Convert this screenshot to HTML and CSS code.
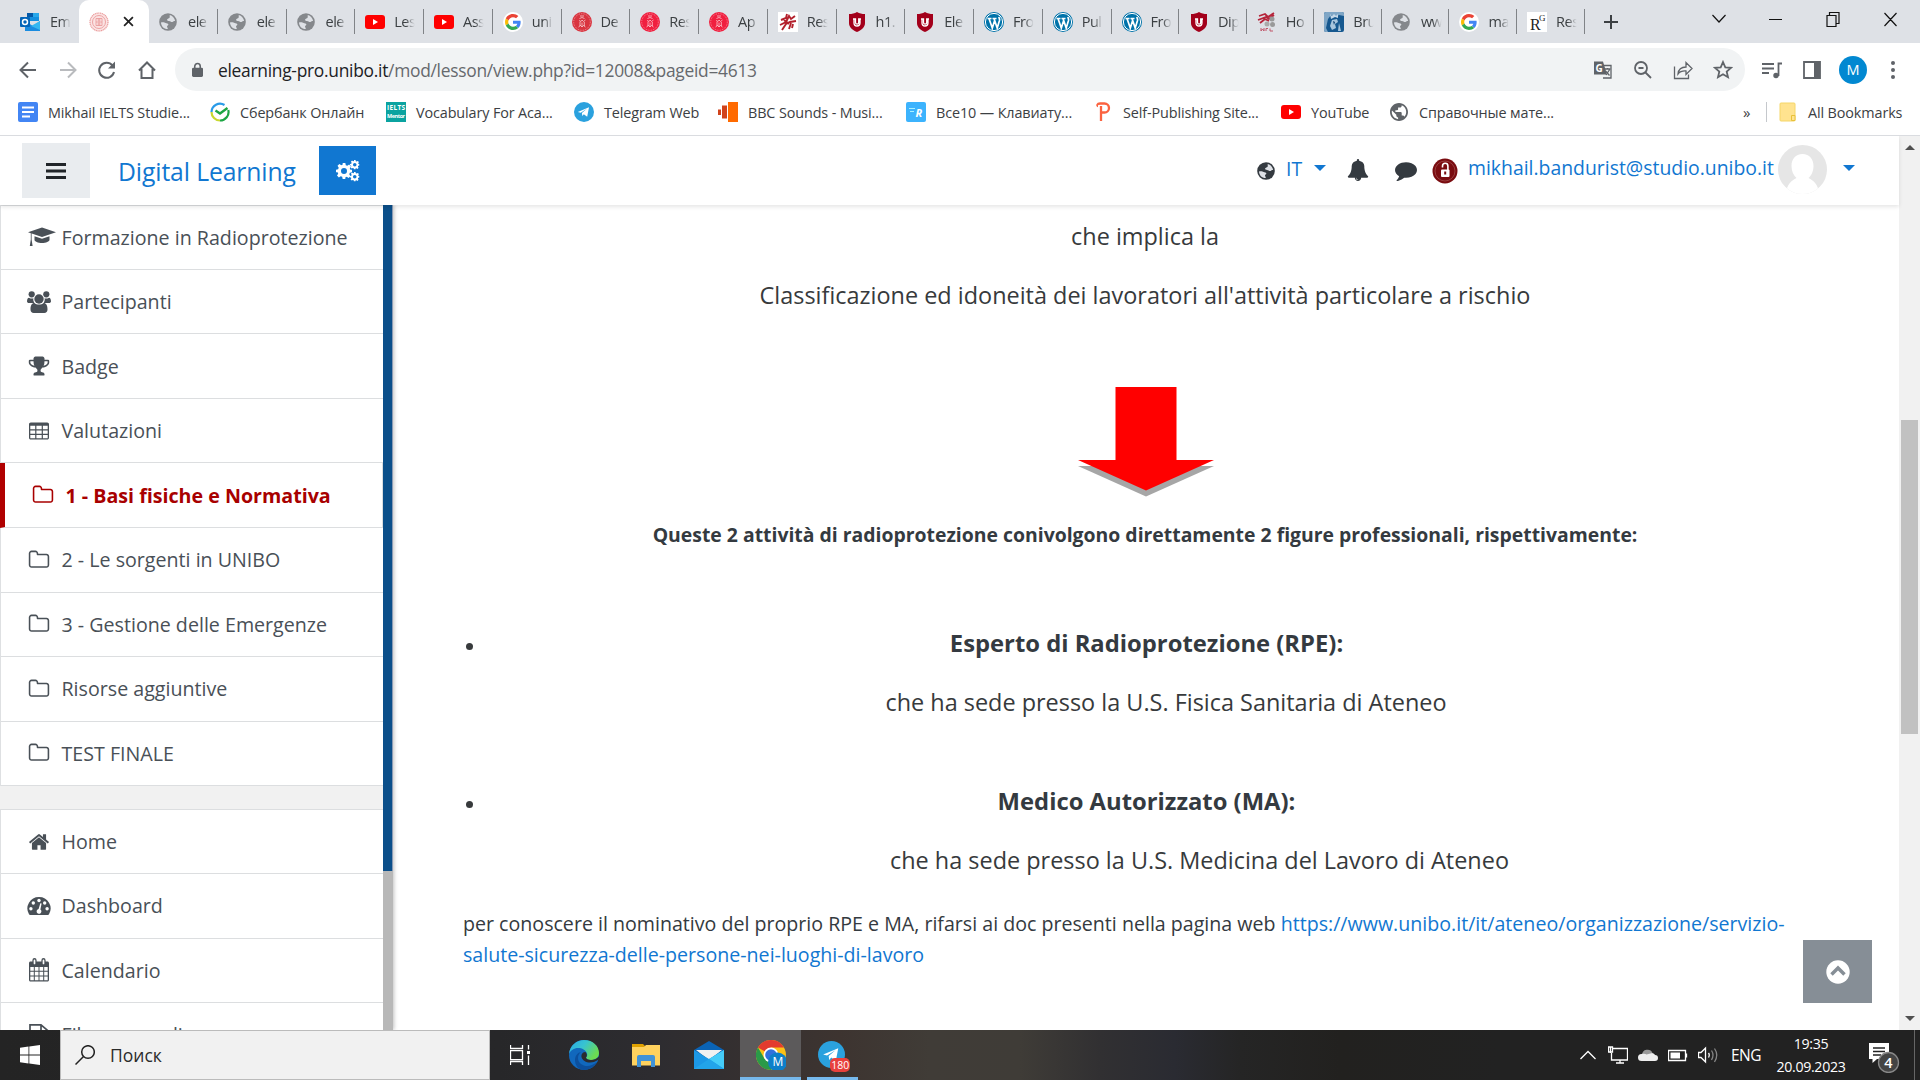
FILE: index.html
```html
<!DOCTYPE html>
<html lang="it">
<head>
<meta charset="utf-8">
<title>Formazione in Radioprotezione</title>
<link rel="stylesheet" href="styles.css">
</head>
<body>
<svg class="sprite" aria-hidden="true">
  <symbol id="globe" viewBox="2 2 20 20"><path d="M12 2C6.48 2 2 6.48 2 12s4.48 10 10 10 10-4.48 10-10S17.52 2 12 2zm-1 17.93c-3.95-.49-7-3.85-7-7.93 0-.62.08-1.21.21-1.79L9 15v1c0 1.1.9 2 2 2v1.93zm6.9-2.54c-.26-.81-1-1.39-1.9-1.39h-1v-3c0-.55-.45-1-1-1H8v-2h2c.55 0 1-.45 1-1V7h2c1.1 0 2-.9 2-2v-.41c2.93 1.19 5 4.06 5 7.41 0 2.08-.8 3.97-2.1 5.39z"/></symbol>
  <symbol id="favglobe" viewBox="0 0 20 20"><circle cx="10" cy="10" r="9.800"/><path d="M2.200 10.500c2.500-.8 4 0 5.200.7 1 .5 2.800.2 3 1.500.2 1-1.700 1.300-1.500 2.300l1 2.800c-4.300.2-7.500-3-7.700-7.300zM12 2.300c3 .7 5.500 3.500 5.900 6.700-1.200-.3-1.900.6-3 .9-1.300.3-2.400-.9-3.700-1.100-1.300-.1-2.700-.6-2.200-1.700.5-.9 2.100-.8 2.700-1.800.6-.9-.1-2 .3-3z" fill="#dee1e6" class="land"/></symbol>
  <symbol id="youtube" viewBox="0 0 20 20"><rect y="3" width="20" height="14" rx="3" fill="#f00"/><path d="M8 7l5 3-5 3z" fill="#fff"/></symbol>
  <symbol id="google" viewBox="0 0 20 20"><circle cx="10" cy="10" r="10" fill="#fff"/><g transform="translate(2 2) scale(.3333)"><path fill="#EA4335" d="M24 9.500c3.540 0 6.710 1.220 9.210 3.600l6.850-6.850C35.900 2.380 30.470 0 24 0 14.620 0 6.510 5.380 2.560 13.220l7.980 6.190C12.430 13.720 17.740 9.500 24 9.500z"/><path fill="#4285F4" d="M46.980 24.550c0-1.570-.15-3.090-.38-4.550H24v9.020h12.940c-.58 2.960-2.260 5.480-4.780 7.180l7.730 6c4.510-4.180 7.090-10.360 7.090-17.650z"/><path fill="#FBBC05" d="M10.530 28.590c-.48-1.450-.76-2.990-.76-4.590s.27-3.140.76-4.590l-7.980-6.190C.92 16.460 0 20.120 0 24c0 3.880.92 7.540 2.560 10.780l7.970-6.190z"/><path fill="#34A853" d="M24 48c6.480 0 11.930-2.130 15.890-5.810l-7.730-6c-2.150 1.450-4.920 2.300-8.160 2.300-6.260 0-11.570-4.220-13.470-9.910l-7.980 6.190C6.510 42.620 14.620 48 24 48z"/></g></symbol>
  <symbol id="seal" viewBox="0 0 20 20"><circle cx="10" cy="10" r="10" fill="currentColor"/><g fill="none" stroke="#fff" stroke-opacity=".6"><circle cx="10" cy="10" r="8.300" stroke-width=".8" stroke-dasharray=".8 1"/><path d="M8 4h4M7.500 6.500l2.500-1 2.500 1M7 8.500l2 1 1-1.500 1.500 1.500L13.500 8M8 10v4M10 10.500v4M12.300 10v4M6.500 15l2-1.500 1.500 1.500 1.500-1.500 2 1.500" stroke-width="1"/></g></symbol>
  <symbol id="sealpale" viewBox="0 0 20 20"><circle cx="10" cy="10" r="9.300" fill="#fbe3e3"/><g fill="none" stroke="#ea9c9c"><circle cx="10" cy="10" r="9" stroke-width="1.200" stroke-dasharray="1.200 .6"/><circle cx="10" cy="10" r="6.500" stroke-width=".9"/><path d="M7 6.500h6v7H7zM7 10h6M10 6v8M8.500 8h3M8.500 12h3" stroke-width=".9"/></g></symbol>
  <symbol id="ushield" viewBox="0 0 20 20"><path d="M10 0c2.500 1.500 5 2 8 2v9c0 4-3 7-8 9-5-2-8-5-8-9V2c3 0 5.500-.5 8-2z" fill="#a3001b"/><path d="M6 7h2.500v3.500a1.600 1.600 0 0 0 3.200 0V7H14M13 7v4a3 3 0 0 1-6 0V7" fill="none" stroke="#fff" stroke-width="1.300"/></symbol>
  <symbol id="wordpress" viewBox="0 0 20 20"><circle cx="10" cy="10" r="10" fill="#0073aa"/><circle cx="10" cy="10" r="8.600" fill="none" stroke="#fff"/><path d="M3.500 6.500h4M8.500 6.500h4M5 6.500l3.300 9.500 2.200-7M10 6.500l3.200 9.500 2.300-7.500c.4-1.500-.2-2.500-.8-3.500" fill="none" stroke="#fff" stroke-width="1.700"/></symbol>
  <symbol id="folder" viewBox="0 0 1792 1792"><path d="M1600 1312v-704q0-40-28-68t-68-28h-704q-40 0-68-28t-28-68v-64q0-40-28-68t-68-28h-320q-40 0-68 28t-28 68v960q0 40 28 68t68 28h1216q40 0 68-28t28-68zm128-704v704q0 92-66 158t-158 66h-1216q-92 0-158-66t-66-158v-960q0-92 66-158t158-66h320q92 0 158 66t66 158v32h672q92 0 158 66t66 158z"/></symbol>
  <symbol id="home" viewBox="0 0 1792 1792"><path d="M1472 992v480q0 26-19 45t-45 19h-384v-384h-256v384h-384q-26 0-45-19t-19-45v-480q0-1 .5-3t.5-3l575-474 575 474q1 2 1 6zm223-69l-62 74q-8 9-21 11h-3q-13 0-21-7l-692-577-692 577q-12 8-24 7-13-2-21-11l-62-74q-8-10-7-23.500t11-21.500l719-599q32-26 76-26t76 26l244 204v-195q0-14 9-23t23-9h192q14 0 23 9t9 23v408l219 182q10 8 11 21.500t-7 23.500z"/></symbol>
  <symbol id="comment" viewBox="0 0 1792 1792"><path d="M1792 896q0 174-120 321.500t-326 233-450 85.500q-70 0-145-8-198 175-460 242-49 14-114 22-17 2-30.500-9t-17.500-29v-1q-3-4-.5-12t2-10 4.500-9.500l6-9 7-8.500 8-9q7-8 31-34.500t34.500-38 31-39.500 32.500-51 27-59 26-76q-157-89-247.500-220t-90.500-281q0-130 71-248.500t191-204.500 286-136.500 348-50.500q244 0 450 85.500t326 233 120 321.500z"/></symbol>
  <symbol id="bell" viewBox="0 0 1792 1792"><path d="M912 1696q0-16-16-16-59 0-101.500-42.500t-42.500-101.500q0-16-16-16t-16 16q0 73 51.500 124.500t124.500 51.500q16 0 16-16zm816-288q0 52-38 90t-90 38h-448q0 106-75 181t-181 75-181-75-75-181h-448q-52 0-90-38t-38-90q50-42 91-88t85-119.500 74.500-158.500 50-206 19.500-260q0-152 117-282.500t307-158.500q-8-19-8-39 0-40 28-68t68-28 68 28 28 68q0 20-8 39 190 28 307 158.500t117 282.500q0 139 19.500 260t50 206 74.500 158.500 85 119.500 91 88z"/></symbol>
  <symbol id="trophy" viewBox="0 0 1792 1792"><path d="M522 883q-74-162-74-371h-256v96q0 78 94.500 162t235.500 113zm1078-275v-96h-256q0 209-74 371 141-29 235.500-113t94.500-162zm128-128v128q0 71-41.500 143t-112 130-173 97.500-215.500 44.500q-42 54-95 95-38 34-52.500 72.500t-14.500 89.500q0 54 30.500 91t97.500 37q75 0 133.500 45.500t58.500 114.500v64q0 14-9 23t-23 9h-832q-14 0-23-9t-9-23v-64q0-69 58.500-114.500t133.500-45.500q67 0 97.500-37t30.500-91q0-51-14.500-89.500t-52.500-72.500q-53-41-95-95-113-5-215.500-44.500t-173-97.500-112-130-41.500-143v-128q0-40 28-68t68-28h288v-96q0-66 47-113t113-47h576q66 0 113 47t47 113v96h288q40 0 68 28t28 68z"/></symbol>
  <symbol id="cap" viewBox="0 0 28 22"><path d="M14 1.500L28 6.300 14 11 0 6.300z"/><path d="M6.500 10.200l7.500 2.500 7.500-2.500v3.800c0 1.500-3.500 3-7.500 3s-7.500-1.500-7.500-3z"/><path d="M3.600 7v6.500l1 6.500H1.800l1-6.500V7z"/></symbol>
  <symbol id="users" viewBox="0 0 24 22"><circle cx="4.700" cy="3.300" r="3.100"/><circle cx="19.300" cy="3.300" r="3.100"/><circle cx="12" cy="8" r="4.700"/><path d="M0 10.500C0 8 .8 6.700 2 6.700c1.500 1 3.500 1 4.400.6C6 9 6.500 10.500 7.400 12H2c-1.200 0-2-.6-2-1.500zM24 10.500c0-2.500-.8-3.800-2-3.800-1.500 1-3.500 1-4.400.6.400 1.700-.1 3.200-1 4.700H22c1.200 0 2-.6 2-1.500zM3.500 18.500c0-4 1.200-6.500 4-6.500 2 2 7 2 9 0 2.800 0 4 2.500 4 6.500 0 2.200-1.300 3.500-3.200 3.500H6.700c-1.900 0-3.200-1.300-3.200-3.500z"/></symbol>
  <symbol id="table" viewBox="0 0 22 22"><path fill-rule="evenodd" d="M2.800 2.500h16.400c1 0 1.800.8 1.800 1.800v13.400c0 1-.8 1.800-1.800 1.800H2.800c-1 0-1.800-.8-1.800-1.800V4.300c0-1 .8-1.800 1.800-1.800zM2.300 5.800v3.400H7.200V5.800zm6.100 0v3.400h5.300V5.800zm6.500 0v3.400h4.800V5.800zM2.300 10.400v3.400h4.900v-3.400zm6.100 0v3.400h5.300v-3.400zm6.500 0v3.400h4.800v-3.400zM2.300 15v3.200h4.900V15zm6.100 0v3.200h5.300V15zm6.500 0v3.200h4.800V15z"/></symbol>
  <symbol id="gauge" viewBox="0 0 24 20"><path d="M12 1a11.500 11.500 0 0 1 10 17.300c-.3.500-.6.700-1.100.7H3.100c-.5 0-.8-.2-1.100-.7A11.500 11.500 0 0 1 12 1z"/><g fill="#fff"><circle cx="12" cy="4.500" r="1.700"/><circle cx="6.300" cy="7" r="1.700"/><circle cx="17.700" cy="7" r="1.700"/><circle cx="3.900" cy="12.700" r="1.700"/><circle cx="20.100" cy="12.700" r="1.700"/><path d="M13.300 7.200l1.300.3-1.200 5.900a2.400 2.400 0 1 1-1.800-.4z"/></g></symbol>
  <symbol id="calendar" viewBox="0 0 22 24"><path fill-rule="evenodd" d="M2.500 3.500h17c.8 0 1.500.7 1.500 1.500V22c0 .8-.7 1.500-1.500 1.500h-17C1.700 23.500 1 22.800 1 22V5c0-.8.7-1.500 1.500-1.500zm-.2 5.500v3.700h3.500V9zm4.500 0v3.700h3.700V9zm4.700 0v3.700h3.700V9zm4.700 0v3.700h3.500V9zM2.300 13.700v3.800h3.500v-3.800zm4.500 0v3.800h3.700v-3.800zm4.700 0v3.800h3.700v-3.800zm4.700 0v3.800h3.500v-3.800zM2.300 18.500v3.700h3.500v-3.700zm4.500 0v3.700h3.700v-3.700zm4.700 0v3.700h3.700v-3.700zm4.700 0v3.700h3.500v-3.700z"/><path d="M6.500 2.200v3.300M15.500 2.200v3.300" stroke="#495057" stroke-width="4.200" stroke-linecap="round"/><path d="M6.500 2.400v3M15.500 2.400v3" stroke="#fff" stroke-width="1.700" stroke-linecap="round"/></symbol>
  <symbol id="file" viewBox="0 0 22 24"><path fill="none" stroke="currentColor" stroke-width="1.700" d="M2 1.800h11l7 6V23H2zM13 2v6h7"/></symbol>
  <symbol id="telegram" viewBox="0 0 20 20"><circle cx="10" cy="10" r="10" fill="#2aa1de"/><path d="M3.800 10L15 5.300l-1.800 9.500-3.400-2.500-1.500 1.800-.4-3 5-4.300-6.200 3.900z" fill="#fff"/></symbol>
  <symbol id="gear" viewBox="-12 -12 24 24"><path fill-rule="evenodd" d="M-2-12h4l.7 3.200 2.200.9 2.800-1.800 2.800 2.800-1.800 2.800.9 2.200L12-2v4l-3.200.7-.9 2.200 1.800 2.800-2.800 2.800-2.800-1.800-2.200.9L2 12h-4l-.7-3.200-2.200-.9-2.800 1.800-2.800-2.800 1.800-2.800-.9-2.200L-12 2v-4l3.200-.7.900-2.200-1.800-2.800 2.800-2.800 2.800 1.800 2.200-.9zM0-4.500a4.500 4.500 0 1 0 0 9 4.500 4.500 0 1 0 0-9z"/></symbol>
</svg>

<header class="tabstrip">
  <div class="tab first"><svg class="fav" viewBox="0 0 20 20"><path d="M7 1h12v8H7z" fill="#1490df"/><path d="M7 1h6v4H7z" fill="#0358a7"/><path d="M13 1h6v4h-6z" fill="#28a8ea"/><path d="M5 9l8 5 7-5v10H5z" fill="#1a8ce0"/><path d="M20 9v9l-9-4z" fill="#35b8f1"/><rect y="5" width="10" height="10" rx="1" fill="#0364b8"/><circle cx="5" cy="10" r="2.500" fill="none" stroke="#fff" stroke-width="1.500"/></svg><span>Em</span></div>
  <div class="tab active"><svg class="fav"><use href="#sealpale"/></svg><svg class="close" viewBox="0 0 10 10"><path d="M1 1l8 8M9 1L1 9"/></svg></div>
  <div class="tab"><svg class="fav grey"><use href="#favglobe"/></svg><span>ele</span></div>
  <div class="tab"><svg class="fav grey"><use href="#favglobe"/></svg><span>ele</span></div>
  <div class="tab"><svg class="fav grey"><use href="#favglobe"/></svg><span>ele</span></div>
  <div class="tab"><svg class="fav"><use href="#youtube"/></svg><span>Les</span></div>
  <div class="tab"><svg class="fav"><use href="#youtube"/></svg><span>Ass</span></div>
  <div class="tab"><svg class="fav"><use href="#google"/></svg><span>uni</span></div>
  <div class="tab"><svg class="fav rosso"><use href="#seal"/></svg><span>De</span></div>
  <div class="tab"><svg class="fav red"><use href="#seal"/></svg><span>Res</span></div>
  <div class="tab"><svg class="fav red"><use href="#seal"/></svg><span>Ap</span></div>
  <div class="tab"><svg class="fav" viewBox="0 0 20 20"><path d="M0 0h20v20H0z" fill="#fff"/><path d="M3 8l5-2 1-4M2 13l6-3 3-6 2 3 4-3M4 18l4-6 4-2 6-1M11 17l2-6M15 12l-1 4M6 8l5 4" fill="none" stroke="#b3202c" stroke-width="1.900"/></svg><span>Res</span></div>
  <div class="tab"><svg class="fav"><use href="#ushield"/></svg><span>h1.</span></div>
  <div class="tab"><svg class="fav"><use href="#ushield"/></svg><span>Ele</span></div>
  <div class="tab"><svg class="fav"><use href="#wordpress"/></svg><span>Fro</span></div>
  <div class="tab"><svg class="fav"><use href="#wordpress"/></svg><span>Pul</span></div>
  <div class="tab"><svg class="fav"><use href="#wordpress"/></svg><span>Fro</span></div>
  <div class="tab"><svg class="fav"><use href="#ushield"/></svg><span>Dip</span></div>
  <div class="tab"><svg class="fav" viewBox="0 0 20 20"><path d="M2 4l6-2 3 3 6-4M1 8l8-3 3 2 5-4M3 11l5-4 4 2" fill="none" stroke="#b5243a" stroke-width="1.800"/><circle cx="15" cy="7" r="2.500" fill="#999"/><circle cx="10" cy="12" r="2.500" fill="#aaa"/><circle cx="15.500" cy="12.500" r="2.500" fill="#999"/><path d="M4 16v3l1.500-2L7 19v-3M9 19v-2.500h2M13 16.500v2.500h3" fill="none" stroke="#c0566a" stroke-width="1"/></svg><span>Ho</span></div>
  <div class="tab"><svg class="fav" viewBox="0 0 20 20"><rect width="20" height="20" rx="2" fill="#16588f"/><path d="M0 2a2 2 0 0 1 2-2h16a2 2 0 0 1 2 2v2l-5-1-4 2-4-2-3 4-2 9 2 4H2a2 2 0 0 1-2-2z" fill="#7fa6c6"/><path d="M6 2l2 2 2-2 2 2 2-2v4l-3-1-4 2z" fill="#c5d8e8"/><path d="M8 8l5-1 1 3-3 2 1 4-4 2-2-4zM15 11l2 8h-3z" fill="#a9c6dd"/><path d="M9 9l2 1-1 3z" fill="#0c3f6e"/></svg><span>Bru</span></div>
  <div class="tab"><svg class="fav grey"><use href="#favglobe"/></svg><span>ww</span></div>
  <div class="tab"><svg class="fav"><use href="#google"/></svg><span>ma</span></div>
  <div class="tab"><svg class="fav" viewBox="0 0 20 20"><path d="M0 0h20v20H0z" fill="#fff"/><text x="3" y="18" font-size="16" class="serif">R</text><text x="12" y="9" font-size="9" class="serif">G</text></svg><span>Res</span></div>
  <svg class="newtab" viewBox="0 0 16 16"><path d="M8 1v14M1 8h14"/></svg>
  <svg class="winctl" viewBox="0 0 190 20"><path d="M6.500 6l6.500 7 6.500-7M63 10.500h13M121 6.500h9v11h-9zM123.500 6.500v-3h9.500v11h-3M178.500 4l12 13M190.500 4l-12 13" /></svg>
</header>

<section class="toolbar">
  <nav class="navbuttons">
    <svg viewBox="0 0 20 20"><path d="M18 10H3M10 2.500L2.500 10l7.500 7.500"/></svg>
    <svg class="off" viewBox="0 0 20 20"><path d="M2 10h15M10 2.500l7.500 7.500-7.500 7.500"/></svg>
    <svg viewBox="0 0 20 20"><path d="M17 12a7.500 7.500 0 1 1-1.500-6.500"/><path d="M18 1.500v7h-7z" class="solid"/></svg>
    <svg viewBox="0 0 20 20"><path d="M2 10.500L10 2.500l8 8M4.500 9v9h11V9"/></svg>
  </nav>
  <div class="omnibox">
    <svg class="lock" viewBox="0 0 12 16"><rect y="5.500" width="12" height="10" rx="1.500"/><path d="M3 6V4a3 3 0 0 1 6 0v2" fill="none" stroke="#5f6368" stroke-width="1.700"/></svg>
    <span class="url"><b>elearning-pro.unibo.it</b>/mod/lesson/view.php?id=12008&amp;pageid=4613</span>
    <div class="omniicons">
      <svg viewBox="0 0 20 20"><path d="M8 5.500h10v12.500h-8" class="thin"/><path d="M1 1.500h9l4 13H1z" class="solid"/><text x="2.500" y="11.500" font-size="10">G</text><path d="M11.500 9h6M14.500 8v1.500M13 15l4-6M12.500 11l4 4.500" class="thin"/></svg>
      <svg viewBox="0 0 20 20"><circle cx="8" cy="8" r="6"/><path d="M12.500 12.500l5.500 5.500M5.500 8h5"/></svg>
      <svg viewBox="0 0 20 20"><path d="M1.500 6.500v12h14v-4M5 14c.5-5 3-7 8-7V2.500l6 6-6 6V11c-4-.3-6 .5-8 3z" class="thin"/></svg>
      <svg viewBox="0 0 20 20"><path d="M10 2l2.300 5.300 5.700.5-4.300 3.800 1.300 5.600-5-3-5 3 1.300-5.600L2 7.800l5.700-.5z"/></svg>
    </div>
  </div>
  <div class="actions">
    <svg viewBox="0 0 20 20"><path d="M0 4h12M0 8.500h12M0 13h7M16.500 16V3.500H20"/><circle cx="14" cy="15.500" r="2.700" class="solid"/></svg>
    <svg viewBox="0 0 20 20"><path d="M2 2h16v16H2z"/><path d="M12 2h6v16h-6z" class="solid"/></svg>
    <span class="profile">M</span>
    <svg class="dots" viewBox="0 0 20 20"><circle cx="10" cy="3" r="2"/><circle cx="10" cy="10" r="2"/><circle cx="10" cy="17" r="2"/></svg>
  </div>
</section>

<nav class="bookmarks">
  <a><svg viewBox="0 0 20 20"><rect width="20" height="20" rx="2" fill="#4285f4"/><path d="M4 5.500h12M4 10h12M4 14.500h8" stroke="#fff" stroke-width="2"/></svg><span>Mikhail IELTS Studie...</span></a>
  <a><svg viewBox="0 0 20 20"><path d="M14.500 3A8.500 8.500 0 0 0 1.500 10" fill="none" stroke="#2a9be8" stroke-width="2.200"/><path d="M1.500 10A8.500 8.500 0 0 0 10 18.500" fill="none" stroke="#c8d830" stroke-width="2.200"/><path d="M10 18.500A8.500 8.500 0 0 0 18.300 8" fill="none" stroke="#1da544" stroke-width="2.200"/><path d="M5.500 8.500L10 11.500 17.500 6" fill="none" stroke="#1da544" stroke-width="2.400"/></svg><span>Сбербанк Онлайн</span></a>
  <a><svg viewBox="0 0 20 20"><path d="M0 0h20v20H0z" fill="#0ba3a0"/><text x="1" y="8" font-size="6.500" font-weight="700" fill="#fff" textLength="18">IELTS</text><text x="1" y="16" font-size="5.500" font-weight="700" fill="#fff" textLength="18">Mentor</text></svg><span>Vocabulary For Aca...</span></a>
  <a><svg><use href="#telegram"/></svg><span>Telegram Web</span></a>
  <a><svg viewBox="0 0 20 20"><path d="M0 7.500h3v5.500H0zM4 3.500h5v13H4z" fill="#d1431b"/><path d="M10 0h10v20H10z" fill="#ff6a00"/></svg><span>BBC Sounds - Musi...</span></a>
  <a><svg viewBox="0 0 20 20"><rect width="20" height="20" rx="2" fill="#3cb3fd"/><path d="M3 6.500h6M4 9.500h4" stroke="#a8f0ff" stroke-width="1.200"/><text x="9.500" y="14.500" font-size="11" font-weight="700" font-style="italic" fill="#fff">R</text></svg><span>Все10 — Клавиату...</span></a>
  <a><svg viewBox="0 0 20 20"><path d="M8 19V4M5 4c-1 0-1-2.500 2-2.500h4.500a4.300 4.300 0 0 1 0 9H8" fill="none" stroke="#fb6340" stroke-width="2.300"/></svg><span>Self-Publishing Site...</span></a>
  <a><svg><use href="#youtube"/></svg><span>YouTube</span></a>
  <a><svg class="dark"><use href="#globe"/></svg><span>Справочные мате...</span></a>
  <a class="more">»</a>
  <a class="all"><svg viewBox="0 0 20 20"><path d="M3 1h13a1 1 0 0 1 1 1v16a1 1 0 0 1-1 1H3a1 1 0 0 1-1-1V2a1 1 0 0 1 1-1z" fill="#ffe38f" stroke="#f5d668"/><path d="M13.500 18.500v-5H17v5z" fill="#ffe38f" stroke="#e8c13a"/></svg><span>All Bookmarks</span></a>
</nav>

<div class="viewport">
  <div class="page">
    <header class="sitebar">
      <button class="burger"><svg viewBox="0 0 20 18"><path d="M.5 2.500h19M.5 9h19M.5 15.500h19"/></svg></button>
      <a class="brand">Digital Learning</a>
      <button class="gears"><svg viewBox="0 0 24 22"><use href="#gear" x="0" y="3" width="16" height="16"/><use href="#gear" x="14" y="0" width="9.500" height="9.500"/><use href="#gear" x="14" y="12" width="9.500" height="9.500"/></svg></button>
      <div class="usermenu">
        <svg class="lang"><use href="#favglobe"/></svg><a class="it">IT</a><i class="caret"></i>
        <svg class="bell"><use href="#bell"/></svg>
        <svg class="chat"><use href="#comment"/></svg>
        <svg class="access" viewBox="0 0 26 26"><circle cx="13" cy="13" r="12.500" fill="#7a0c10"/><circle cx="13" cy="13" r="10" fill="none" stroke="#a04a4a" stroke-width=".8"/><rect x="9" y="11.500" width="8.500" height="7.500" rx="1" fill="#fff"/><path d="M10.500 9.500V8a2.700 2.700 0 0 1 5.400 0v4" fill="none" stroke="#fff" stroke-width="1.600"/><path d="M13.200 13.500v3" stroke="#7a0c10" stroke-width="2"/></svg>
        <a class="mail">mikhail.bandurist@studio.unibo.it</a>
        <svg class="face" viewBox="0 0 49 49"><clipPath id="round"><circle cx="24.500" cy="24.500" r="24.500"/></clipPath><g clip-path="url(#round)"><path d="M0 0h49v49H0z" fill="#e6e6e6"/><path d="M24.500 9c7 0 11 5 11 12 0 5-2 9.500-5 12 5 2.500 9.500 6 11 16h-34c1.500-10 6-13.500 11-16-3-2.500-5-7-5-12 0-7 4-12 11-12z" fill="#fff"/></g></svg>
        <i class="caret"></i>
      </div>
    </header>
    <div class="columns">
      <aside class="drawer">
        <div class="lists">
          <ul class="menu">
            <li><svg class="wide"><use href="#cap"/></svg>Formazione in Radioprotezione</li>
            <li><svg class="mid"><use href="#users"/></svg>Partecipanti</li>
            <li><svg><use href="#trophy"/></svg>Badge</li>
            <li><svg><use href="#table"/></svg>Valutazioni</li>
            <li class="current"><svg><use href="#folder"/></svg>1 - Basi fisiche e Normativa</li>
            <li><svg><use href="#folder"/></svg>2 - Le sorgenti in UNIBO</li>
            <li><svg><use href="#folder"/></svg>3 - Gestione delle Emergenze</li>
            <li><svg><use href="#folder"/></svg>Risorse aggiuntive</li>
            <li><svg><use href="#folder"/></svg>TEST FINALE</li>
          </ul>
          <ul class="menu">
            <li><svg><use href="#home"/></svg>Home</li>
            <li><svg class="mid"><use href="#gauge"/></svg>Dashboard</li>
            <li><svg class="mid"><use href="#calendar"/></svg>Calendario</li>
            <li><svg class="mid"><use href="#file"/></svg>File personali</li>
          </ul>
        </div>
        <div class="drawerbar"><i></i></div>
      </aside>
      <main class="lesson">
        <p class="large">che implica la</p>
        <p class="large">Classificazione ed idoneità dei lavoratori all'attività particolare a rischio</p>
        <svg class="arrow" viewBox="0 0 136 110"><path d="M0 79h136L68 109.500z" fill="#a6a6a6"/><path d="M0 73h136v6H0z" fill="#fff"/><path d="M37.500 0h61v73H136L68 103.500 0 73h37.500z" fill="#f00"/></svg>
        <p class="lead">Queste 2 attività di radioprotezione conivolgono direttamente 2 figure professionali, rispettivamente:</p>
        <ul class="roles">
          <li><strong>Esperto di Radioprotezione (RPE):</strong><p class="large seat">che ha sede presso la U.S. Fisica Sanitaria di Ateneo</p></li>
          <li><strong>Medico Autorizzato (MA):</strong><p class="large seat far">che ha sede presso la U.S. Medicina del Lavoro di Ateneo</p></li>
        </ul>
        <p class="note">per conoscere il nominativo del proprio RPE e MA, rifarsi ai doc presenti nella pagina web <a>https://www.unibo.it/it/ateneo/organizzazione/servizio-<br>salute-sicurezza-delle-persone-nei-luoghi-di-lavoro</a></p>
        <button class="totop"><svg viewBox="0 0 24 24"><circle cx="12" cy="12" r="11.700" fill="#fff"/><path d="M5.500 14.500L12 8l6.500 6.500" fill="none" stroke="#868e96" stroke-width="3.500"/></svg></button>
      </main>
    </div>
  </div>
  <div class="scrollbar"><i class="up"></i><i class="thumb"></i><i class="down"></i></div>
</div>

<footer class="taskbar">
  <div class="start"><svg viewBox="0 0 20 20"><path d="M0 2.800l8.500-1.200v8H0zM9.300 1.500L20 0v9.600H9.300zM0 10.400h8.500v8L0 17.200zM9.300 10.400H20V20L9.300 18.500z" fill="#fff"/></svg></div>
  <div class="search"><svg viewBox="0 0 20 20"><circle cx="13" cy="7" r="6.300"/><path d="M8.500 11.500L.5 19.500"/></svg><span>Поиск</span></div>
  <div class="apps">
    <div class="app"><svg class="view" viewBox="0 0 20 20"><path d="M.5 0v3.500h12V0M.5 5.700h12v9H.5zM.5 20v-3.500h12V20M18.500 0v4.500M18.500 10.500V20"/><path d="M17 6h3v3h-3z" class="fillw"/></svg></div>
    <div class="app"><svg viewBox="0 0 30 30"><defs><linearGradient id="eg" x1="0" y1="0" x2="1" y2=".5"><stop offset="0" stop-color="#28a9e8"/><stop offset=".5" stop-color="#38c3d0"/><stop offset="1" stop-color="#6cdc50"/></linearGradient></defs><circle cx="15" cy="15" r="15" fill="#1168bd"/><path d="M0 14C1 5 8 0 15 0c9 0 15 6 15 13 0 5-4 7-8 7-3 0-5-1-5-2.500 1-1 1.500-2 1-4C17 10 13 8 9 8c-4 0-7.500 2.500-9 6z" fill="url(#eg)"/><path d="M12 12c-4 3-4 9 0 12s10 3 16-2c-3 5-8 8-13 8C9 30 6 25 6 20c0-4 2-7 6-8z" fill="#0c4f9c"/><path d="M16.500 12c-3 0-4.500 2.500-4 5 .8 3.500 4.500 5.500 8.500 5.500 3 0 5-1 7-2l2.500-1.500v-3C28 19 25 20 22 20c-3 0-5-1-5-2.500 1-1 1.500-3 -.5-5.500z" fill="#2b2b2f"/></svg></div>
    <div class="app"><svg viewBox="0 0 30 30"><path d="M1 4h11l3 3H1z" fill="#e0a100"/><path d="M1 7h12l2-2h14v20.500H1z" fill="#ffd25e"/><path d="M6 27V17a2 2 0 0 1 2-2h14a2 2 0 0 1 2 2v10h-4v-6H10v6z" fill="#4293d6"/></svg></div>
    <div class="app"><svg viewBox="0 0 30 30"><path d="M0 10L15 1l15 9v5H0z" fill="#0a63b5"/><path d="M2 10h26L15 20z" fill="#f1f1f1"/><path d="M0 10l15 9 15-9v19H0z" fill="#1c98e6"/><path d="M15 19l15-9v19z" fill="#45ccf8"/><path d="M0 29h30L15 19z" fill="#22a4ea"/></svg></div>
    <div class="app on"><svg viewBox="0 0 30 30"><circle cx="15" cy="15" r="15" fill="#fbc116"/><path d="M15 15L2 7.500A15 15 0 0 1 28 7.500H15z" fill="#e33b2e"/><path d="M2 7.500A15 15 0 0 0 15 30l6.500-11.300L8.500 18.700z" fill="#2a9a48"/><circle cx="15" cy="15" r="7.500" fill="#fff"/><circle cx="15" cy="15" r="5.800" fill="#3271dd"/><circle cx="21.500" cy="22" r="9.500" fill="#0e7fc9"/><text x="16.500" y="26.200" font-size="12" fill="#fff">M</text></svg></div>
    <div class="app run"><svg viewBox="0 0 34 32"><use href="#telegram" x="1" y="1" width="27" height="27"/><rect x="13" y="18" width="20" height="14" rx="5" fill="#e8413c"/><text x="14.300" y="29" font-size="10.500" fill="#fff">180</text></svg></div>
  </div>
  <div class="tray">
    <svg class="up" viewBox="0 0 16 10"><path d="M.5 9L8 1.500 15.500 9"/></svg>
    <svg class="t20" viewBox="0 0 20 20"><path d="M5 3.500h14.500v11.500H3.500V8M12 15v3M8 18h8M.5 2h4v5h-4zM2.500 2v6"/></svg>
    <svg class="t20" viewBox="0 0 20 20"><path d="M4 10a5.500 5.500 0 0 1 10.500-2L19 12z" fill="#999" stroke="none"/><path d="M3.500 16a3.500 3.500 0 0 1 0-7c2-.5 4-.5 5 .5l4-1c3-1 4 .5 4.500 1.500a3 3 0 0 1 0 6z" fill="#eee" stroke="none"/></svg>
    <svg class="t20" viewBox="0 0 20 20"><path d="M.5 5.500h17v10H.5zM18.500 8.500v4"/><path d="M2.500 7.500h9.500v6H2.500z" class="fillw"/></svg>
    <svg class="t20" viewBox="0 0 20 20"><path d="M.5 7.500h2.500L7.500 3v14L3 12.500H.5zM10.500 8q1.500 2 0 4.500"/><path d="M13.500 5.500q3 4.500 0 9.500M16.500 3.500q4.500 6.500 0 13.500" stroke-opacity=".45"/></svg>
    <span class="kbd">ENG</span>
    <span class="clock">19:35<br>20.09.2023</span>
    <svg class="notes" viewBox="0 0 32 32"><path d="M1 2h20v16H9l-4.500 4v-4H1z" class="fillw"/><path d="M5 7h12M5 10.500h12M5 14h8" stroke="#222"/><circle cx="20.500" cy="21.500" r="10" fill="#444" stroke="#888"/><text x="16.300" y="26.800" font-size="14.500" font-weight="600" fill="#fff" stroke="none">4</text></svg>
    <i class="peek"></i>
  </div>
</footer>
</body>
</html>
```

FILE: styles.css
```css
* { box-sizing: border-box; }
body {
  margin: 0;
  width: 1920px;
  height: 1080px;
  overflow: hidden;
  display: flex;
  flex-direction: column;
  font-family: "Open Sans", "Noto Sans", sans-serif;
  background: #fff;
}
svg { display: block; flex: none; }
ul, p { margin: 0; padding: 0; list-style: none; }
button { border: 0; padding: 0; display: flex; align-items: center; justify-content: center; }
.sprite { display: none; }

/* tab strip */
.tabstrip { flex: none; height: 43px; background: #dee1e6; display: flex; align-items: center; }
.tab { flex: none; width: 68.75px; height: 43px; display: flex; align-items: center; padding-left: 10px; position: relative; font-size: 14.5px; color: #3c4043; }
.tab:nth-child(n+17) { width: 67.6px; }
.tab span { margin-left: 9px; width: 23px; white-space: nowrap; letter-spacing: -0.5px; -webkit-mask-image: linear-gradient(90deg, #000 50%, transparent 90%); mask-image: linear-gradient(90deg, #000 50%, transparent 90%); }
.tab::after { content: ""; position: absolute; right: 0; top: 9px; width: 1px; height: 25px; background: #808387; }
.tab.first { width: 79px; padding-left: 20px; }
.tab.first span { margin-left: 10px; }
.tab.first::after, .tab.active::after { display: none; }
.tab.active { width: 70px; background: #fff; border-radius: 10px 10px 0 0; }
.fav { width: 20px; height: 20px; }
.fav.grey { width: 18px; height: 18px; margin-right: 2px; fill: #85888c; }
.fav.rosso { color: #d9343f; }
.fav.red { color: #f01f3f; }
.serif { font-family: "Liberation Serif", serif; fill: #222; }
.close { width: 11px; height: 11px; margin-left: 14px; stroke: #222; stroke-width: 1.6; }
.newtab { width: 16px; height: 16px; margin-left: 18px; stroke: #3c4043; stroke-width: 2; }
.winctl { width: 192px; height: 20px; margin: -5px 0 0 86px; fill: none; stroke: #111; stroke-width: 1.2; overflow: visible; }

/* toolbar */
.toolbar { flex: none; height: 53px; display: flex; align-items: center; }
.navbuttons { display: flex; gap: 19.7px; padding-left: 18px; width: 175px; }
.navbuttons svg { width: 20px; height: 20px; fill: none; stroke: #5f6368; stroke-width: 2; }
.navbuttons svg.off { stroke: #b9bbbe; }
.navbuttons .solid { fill: #5f6368; stroke: none; }
.omnibox { width: 1570px; height: 43px; border-radius: 22px; background: #f1f3f4; display: flex; align-items: center; padding: 0 12.5px 0 17px; }
.lock { width: 11px; height: 16px; fill: #5f6368; }
.url { margin-left: 15px; font-size: 17.4px; color: #66696d; white-space: nowrap; letter-spacing: -0.28px; }
.url b { font-weight: 400; color: #202124; }
.omniicons { margin-left: auto; display: flex; gap: 20px; }
.omniicons svg, .actions svg { width: 20px; height: 20px; fill: none; stroke: #5f6368; stroke-width: 1.8; }
.omniicons text { fill: #fff; stroke: none; font-weight: 700; }
.omniicons .solid, .actions .solid { fill: #5f6368; stroke: none; }
.thin { stroke-width: 1.3; }
.actions { display: flex; align-items: center; padding-left: 17px; gap: 20px; }
.actions .dots { margin-left: -3px; fill: #5f6368; stroke: none; }
.profile { width: 28px; height: 28px; margin: 0 -1px 0 -3px; border-radius: 50%; background: #0288d1; color: #fff; font-size: 14.5px; line-height: 28px; text-align: center; }

/* bookmarks */
.bookmarks { flex: none; height: 40px; padding: 0 0 7px 18px; border-bottom: 1px solid #dadce0; display: grid; grid-template-columns: 192px 176px 188px 144px 188px 187px 188px 108px 353px 24px 1fr; align-items: center; font-size: 14.4px; letter-spacing: -0.12px; color: #3c4043; }
.bookmarks a { display: flex; align-items: center; gap: 10px; white-space: nowrap; }
.bookmarks svg { width: 20px; height: 20px; }
.bookmarks .dark { width: 18px; height: 18px; margin: 0 1px; fill: #5f6368; }
.bookmarks .more { font-size: 15px; padding-left: 1px; }
.bookmarks .all { height: 20px; border-left: 1px solid #c5c8cc; padding-left: 10px; }
.bookmarks .all svg { margin-left: 1px; }

/* page frame */
.viewport { flex: none; height: 894px; display: flex; overflow: hidden; }
.page { width: 1899px; display: flex; flex-direction: column; }
.scrollbar { width: 21px; background: #f1f1f1; display: flex; flex-direction: column; align-items: center; padding: 9px 0 9px 0; }
.scrollbar .up { border: 5px solid transparent; border-top: 0; border-bottom: 5px solid #505050; }
.scrollbar .thumb { width: 17px; height: 314px; margin: 270px 0 auto; background: #c1c1c1; }
.scrollbar .down { border: 5px solid transparent; border-bottom: 0; border-top: 5px solid #505050; }

/* site header */
.sitebar { flex: none; height: 69px; display: flex; align-items: center; padding-left: 22px; background: #fff; box-shadow: 0 2px 4px rgba(0, 0, 0, .1); position: relative; z-index: 2; color: #1177d1; }
.burger { width: 68px; height: 55px; background: #e9ecef; }
.burger svg { width: 20px; height: 18px; stroke: #212529; stroke-width: 3; stroke-linecap: round; }
.brand { margin-left: 28px; width: 201px; font-size: 24.7px; letter-spacing: -0.1px; padding-top: 2px; white-space: nowrap; }
.gears { width: 57px; height: 49px; background: #1177d1; }
.gears svg { width: 24px; height: 22px; fill: #fff; }
.usermenu { margin-left: auto; padding-right: 44px; display: flex; align-items: center; font-size: 19.4px; margin-top: -3px; }
.lang { width: 18px; height: 18px; fill: #343a40; margin-top: 3px; }
.lang .land { fill: #fff; }
.it { margin: -2px 13px 0 11px; width: 15px; }
.caret { border: 6px solid transparent; border-bottom: 0; border-top-color: #1177d1; margin-top: -2px; }
.bell { width: 22px; height: 22px; margin: 2px 0 0 21px; fill: #343a40; }
.chat { width: 22px; height: 22px; margin: 1px 0 0 26px; fill: #343a40; }
.access { width: 26px; height: 26px; margin: 3px 0 0 15px; }
.mail { width: 305px; margin: -3px 5px 0 10px; white-space: nowrap; }
.face { width: 49px; height: 49px; margin-right: 16px; }

/* sidebar */
.columns { flex: 1; display: flex; min-height: 0; }
.drawer { width: 393px; display: flex; background: #f1f1f1; box-shadow: 1px 0 4px rgba(0, 0, 0, .25); }
.lists { width: 383px; overflow: hidden; }
.menu { border-left: 1px solid #dee0e2; border-top: 1px solid #dcdee0; margin-bottom: 23px; }
.menu li { height: 64.56px; border-bottom: 1px solid #dcdee0; background: #fff; display: flex; align-items: center; padding-left: 27px; font-size: 19.65px; color: #495057; white-space: nowrap; }
.menu li:first-child { height: 63.8px; }
.menu svg { width: 22px; height: 22px; margin-right: 11.5px; fill: #495057; color: #495057; }
.menu .wide { width: 28px; margin-right: 5.5px; }
.menu .mid { width: 24px; height: 24px; margin: 0 10.5px 0 -1px; }
.menu .current { margin-left: -1px; border-left: 5px solid #b00000; border-right: 1px solid #dcdee0; color: #a80000; font-weight: 700; }
.menu .current svg { fill: #a80000; }
.drawerbar { width: 10px; background: #b8b8b8; }
.drawerbar i { display: block; height: 666px; background: #0b4f8a; border-right: 1px solid #8a9bb5; }

/* lesson */
.lesson { flex: 1; padding: 13px 72px 0 70px; color: #343a40; text-align: center; position: relative; }
.large { font-size: 23.45px; line-height: 37px; margin-bottom: 22px; color: #373a3c; }
.arrow { width: 136px; height: 110px; margin: 73px auto 0; position: relative; left: .5px; }
.lead { font-weight: 700; font-size: 19.4px; line-height: 31px; margin-top: 22px; }
.roles { margin-top: 75px; padding-left: 3px; }
.roles li { position: relative; margin-bottom: 62px; height: 96px; }
.roles li::before { content: ""; position: absolute; left: 0; top: 18px; width: 7px; height: 7px; border-radius: 50%; background: #373a3c; }
.roles strong { display: block; font-size: 23.8px; line-height: 37px; margin-bottom: 22px; }
.seat { padding-left: 39px; }
.seat.far { padding-left: 106px; }
.note { margin-top: -33px; text-align: left; font-size: 19.63px; line-height: 31px; white-space: nowrap; }
.note a { color: #1177d1; }
.totop { position: absolute; right: 27px; bottom: 27px; width: 69px; height: 63px; background: #868e96; }
.totop svg { width: 24px; height: 24px; }

/* taskbar */
.taskbar { flex: none; height: 50px; display: flex; background: linear-gradient(90deg, #242424 0, #272729 500px, #2d2c30 650px, #3d3430 840px, #403c37 930px, #3f3c37 1020px, #313032 1100px, #2a2b32 1175px, #252525 1240px, #22211f 1340px, #222 1500px); color: #fff; }
.start { width: 60px; display: flex; align-items: center; justify-content: center; }
.start svg { width: 20px; height: 20px; }
.search { width: 430px; background: #f1f1f1; border: 1px solid #bbb; display: flex; align-items: center; padding-left: 14px; color: #2b2b2b; font-size: 17.5px; }
.search svg { width: 20px; height: 20px; margin-right: 15px; fill: none; stroke: #222; stroke-width: 1.5; }
.apps { display: flex; }
.app { width: 62.5px; display: flex; align-items: center; justify-content: center; }
.app svg { width: 30px; height: 30px; }
.app .view { width: 20px; height: 20px; margin-right: 3px; fill: none; stroke: #fff; stroke-width: 1.3; }
.fillw { fill: #fff; stroke: none; }
.app.on { width: 61px; background: #5c5a5b; border-bottom: 3px solid #76b9ed; padding-top: 3px; }
.app.run { width: 51px; margin-left: 6px; border-bottom: 3px solid #76b9ed; padding: 5px 0 0 3px; }
.app.run svg { width: 34px; height: 32px; }
.tray { margin-left: auto; display: flex; align-items: center; }
.tray svg { fill: none; stroke: #fff; stroke-width: 1.3; }
.tray .up { width: 16px; height: 10px; margin-right: 12px; }
.t20 { width: 20px; height: 20px; margin-right: 10px; }
.kbd { font-size: 15.5px; width: 29px; margin: 0 16px 0 3px; letter-spacing: -0.5px; }
.clock { width: 70px; text-align: center; font-size: 14.2px; line-height: 23px; letter-spacing: -0.35px; white-space: nowrap; }
.notes { width: 32px; height: 32px; margin: 4px 14px 0 22px; }
.peek { width: 6px; height: 50px; border-left: 1px solid #666; }
```
